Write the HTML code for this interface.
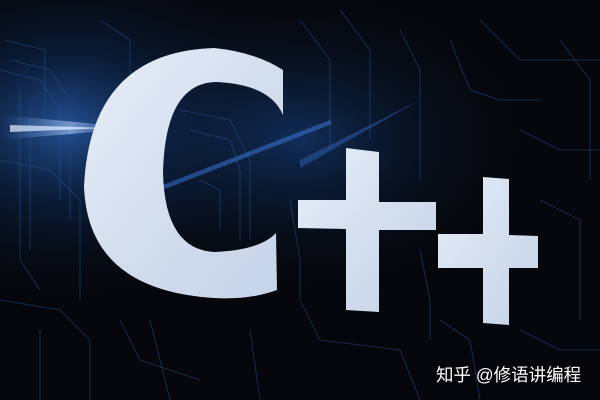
<!DOCTYPE html>
<html><head><meta charset="utf-8"><style>
html,body{margin:0;padding:0;width:600px;height:400px;overflow:hidden;background:#05070c}
svg{display:block}
</style></head><body>
<svg width="600" height="400" viewBox="0 0 600 400" xmlns="http://www.w3.org/2000/svg">
<defs>
<radialGradient id="g1" cx="0.12" cy="0.32" r="0.45">
<stop offset="0" stop-color="#2a5fb0" stop-opacity="0.85"/>
<stop offset="0.4" stop-color="#0f2a55" stop-opacity="0.6"/>
<stop offset="1" stop-color="#05070c" stop-opacity="0"/>
</radialGradient>
<radialGradient id="g2" cx="0.5" cy="0.35" r="0.4">
<stop offset="0" stop-color="#173e7a" stop-opacity="0.7"/>
<stop offset="1" stop-color="#05070c" stop-opacity="0"/>
</radialGradient>
<linearGradient id="streak" x1="0" y1="0" x2="1" y2="0">
<stop offset="0" stop-color="#5a9cff" stop-opacity="0"/>
<stop offset="0.5" stop-color="#bcd8ff" stop-opacity="0.9"/>
<stop offset="1" stop-color="#5a9cff" stop-opacity="0"/>
</linearGradient>
<linearGradient id="letter" x1="0" y1="0" x2="1" y2="1">
<stop offset="0" stop-color="#e8eff9"/>
<stop offset="0.5" stop-color="#d3deee"/>
<stop offset="1" stop-color="#c6d4e8"/>
</linearGradient>
</defs>
<rect width="600" height="400" fill="#05070c"/>
<rect width="600" height="400" fill="url(#g1)"/>
<rect width="600" height="400" fill="url(#g2)"/>
<g stroke="#2c5a9a" stroke-width="0.8" fill="none" opacity="0.55">
<path d="M0 70 L40 80 L60 110 L60 200"/><path d="M10 60 L50 70 L70 100 L70 220"/>
<path d="M20 90 L20 260 L40 290"/><path d="M30 100 L30 250"/><path d="M0 160 L50 170 L80 200 L80 300"/>
<path d="M0 300 L60 310 L90 340 L90 400"/><path d="M120 320 L140 360 L200 380"/>
<path d="M300 20 L330 60 L330 150"/><path d="M340 10 L370 50 L370 140"/><path d="M400 30 L420 70 L420 180"/>
<path d="M450 40 L470 90 L500 100 L540 100"/><path d="M480 20 L520 60 L600 60"/><path d="M520 130 L560 150 L600 150"/>
<path d="M540 200 L580 220 L580 320"/><path d="M300 300 L320 340 L400 350 L420 400"/><path d="M250 330 L260 400"/>
<path d="M180 110 L230 120 L250 160 L250 240"/><path d="M190 130 L230 140 L240 170 L240 240"/><path d="M200 180 L220 190 L220 230"/>
<path d="M440 320 L470 340 L480 400"/><path d="M520 330 L560 350 L600 350"/>
<path d="M5 40 L45 50 L45 120"/><path d="M100 20 L130 40 L130 80"/><path d="M150 320 L170 400"/><path d="M40 330 L40 400"/>
<path d="M290 200 L300 260 L300 300"/><path d="M420 250 L430 300 L430 340"/><path d="M560 40 L590 80 L590 180"/>
</g>
<path d="M0 115 L140 128 L0 140 Z" fill="url(#streak)" opacity="0.6"/>
<path d="M10 125 L110 128 L10 132 Z" fill="#e6f0ff" opacity="0.7"/>
<path d="M150 190 L330 120 L332 124 L152 194 Z" fill="#3b7be0" opacity="0.5"/>
<path d="M300 160 L420 100 L300 168 Z" fill="#3b7be0" opacity="0.35"/>
<path fill="url(#letter)" fill-rule="evenodd" d="
M283 70 L283 115 Q270 84 215 82 Q165 84 163 173 Q165 250 215 252 Q260 250 276 233 L277 290
Q250 300 214 298 Q88 290 84 187 Q90 52 214 48 Q255 52 283 70 Z"/>
<path fill="url(#letter)" d="M346 148 L379 152 L379 202 L436 202 L436 230 L379 230 L379 312 L346 310 L346 229 L298 228 L298 200 L346 200 Z"/>
<path fill="url(#letter)" d="M483 177 L509 179 L509 235 L538 236 L538 268 L509 268 L509 325 L483 323 L483 268 L438 268 L438 234 L483 234 Z"/>
<text x="436" y="381" font-family="Liberation Sans, Noto Sans CJK SC, sans-serif" font-size="17.5" fill="#ffffff">知乎 @修语讲编程</text>
</svg>
</body></html>
